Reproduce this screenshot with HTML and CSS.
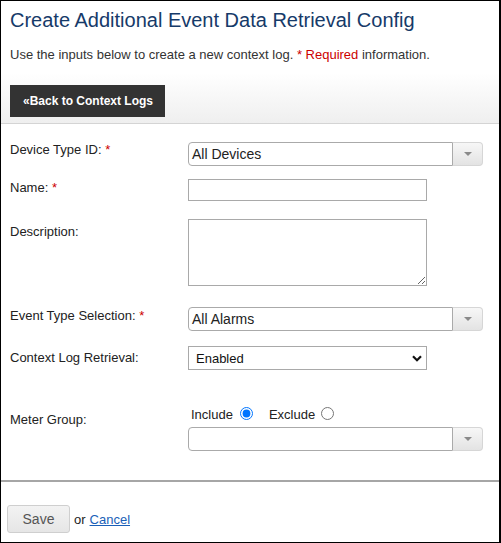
FILE: index.html
```html
<!DOCTYPE html>
<html lang="en">
<head>
<meta charset="utf-8">
<title>Create Additional Event Data Retrieval Config</title>
<link rel="stylesheet" href="styles.css">
</head>
<body>
<div class="page">
  <div class="header">
    <h1 class="title">Create Additional Event Data Retrieval Config</h1>
    <p class="intro">Use the inputs below to create a new context log. <span class="req">* Required</span> information.</p>
    <a class="back-btn" href="#">«Back to Context Logs</a>
  </div>
  <form class="form">
    <div class="row row-1">
      <label class="label">Device Type ID: <span class="req">*</span></label>
      <div class="combo">
        <span class="combo-input">All Devices</span>
        <span class="combo-btn"><svg width="8" height="4" viewBox="0 0 8 4"><path d="M0 0H8L4 4Z" fill="#8a8a8a"/></svg></span>
      </div>
    </div>
    <div class="row row-2">
      <label class="label pad-1">Name: <span class="req">*</span></label>
      <input class="text-input" type="text">
    </div>
    <div class="row row-3">
      <label class="label pad-5">Description:</label>
      <textarea class="text-area"></textarea>
    </div>
    <div class="row row-4">
      <label class="label pad-1">Event Type Selection: <span class="req">*</span></label>
      <div class="combo">
        <span class="combo-input">All Alarms</span>
        <span class="combo-btn"><svg width="8" height="4" viewBox="0 0 8 4"><path d="M0 0H8L4 4Z" fill="#8a8a8a"/></svg></span>
      </div>
    </div>
    <div class="row row-5">
      <label class="label pad-4">Context Log Retrieval:</label>
      <div class="select-wrap">
        <select class="select"><option>Enabled</option><option>Disabled</option></select>
        <svg class="chevron" width="10" height="7" viewBox="0 0 10 7"><path d="M1 1.2L5 5.2L9 1.2" fill="none" stroke="#111" stroke-width="2.2"/></svg>
      </div>
    </div>
    <div class="row row-6">
      <label class="label pad-6">Meter Group:</label>
      <div class="meter">
        <div class="radios">
          <span class="radio-text">Include</span><input class="radio radio-inc" type="radio" name="mg" checked>
          <span class="radio-text">Exclude</span><input class="radio radio-exc" type="radio" name="mg">
        </div>
        <div class="combo">
          <span class="combo-input"></span>
          <span class="combo-btn"><svg width="8" height="4" viewBox="0 0 8 4"><path d="M0 0H8L4 4Z" fill="#8a8a8a"/></svg></span>
        </div>
      </div>
    </div>
  </form>
  <div class="footer">
    <button class="save-btn" type="button">Save</button>
    <span class="or">or</span>
    <a class="cancel" href="#">Cancel</a>
  </div>
</div>
</body>
</html>
```
FILE: styles.css
```css
* { box-sizing: border-box; }
html, body { margin: 0; padding: 0; }
body {
  font-family: Arial, "Liberation Sans", sans-serif;
  font-size: 13px;
  color: #222;
  background: #fff;
}
.page {
  width: 501px;
  height: 543px;
  border: 1px solid #000;
  border-right-width: 2px;
  overflow: hidden;
}
.header {
  padding: 7px 9px 6px;
  background: linear-gradient(to bottom, #ffffff 0, #ffffff 72px, #efefef 122px);
  border-bottom: 1px solid #d4d4d4;
}
.title {
  margin: 0;
  font-size: 20px;
  font-weight: normal;
  line-height: 24px;
  color: #163a69;
}
.intro {
  margin: 15px 0 22px;
  line-height: 16px;
  color: #333;
}
.req { color: #cc0000; }
.back-btn {
  display: inline-block;
  height: 32px;
  line-height: 32px;
  padding: 0 12px 0 13px;
  background: #333;
  color: #fff;
  font-weight: bold;
  font-size: 12px;
  text-decoration: none;
}
.form {
  padding: 18px 0 29px 9px;
}
.row {
  display: flex;
  align-items: flex-start;
}
.row-1 { margin-bottom: 13px; }
.row-2 { margin-bottom: 18px; }
.row-3 { margin-bottom: 21px; }
.row-4 { margin-bottom: 15px; }
.row-5 { margin-bottom: 36px; }
.label {
  width: 178px;
  flex: none;
  line-height: 16px;
  color: #222;
}
.pad-1 { padding-top: 1px; }
.pad-4 { padding-top: 4px; }
.pad-5 { padding-top: 5px; }
.pad-6 { padding-top: 6px; }
.combo {
  display: flex;
  width: 295px;
  height: 24px;
}
.combo-input {
  flex: 1;
  border: 1px solid #aaa;
  border-radius: 4px 0 0 4px;
  background: #fff;
  padding: 0 3px;
  font-size: 14px;
  line-height: 22px;
  color: #222;
}
.combo-btn {
  width: 30px;
  flex: none;
  border: 1px solid #d6d6d6;
  border-left: none;
  border-radius: 0 4px 4px 0;
  background: linear-gradient(to bottom, #f7f7f7, #e3e3e3);
  display: flex;
  align-items: center;
  justify-content: center;
}
.text-input {
  width: 239px;
  height: 22px;
  margin: 0;
  border: 1px solid #a9a9a9;
  padding: 0 3px;
  font: inherit;
}
.text-area {
  width: 239px;
  height: 67px;
  margin: 0;
  border: 1px solid #a9a9a9;
  padding: 2px;
  font: inherit;
}
.select-wrap {
  position: relative;
  width: 239px;
  height: 24px;
}
.select {
  appearance: none;
  -webkit-appearance: none;
  width: 100%;
  height: 24px;
  margin: 0;
  border: 1px solid #a9a9a9;
  border-radius: 0;
  background: #fff;
  padding: 0 0 0 7px;
  font: inherit;
  font-size: 13px;
  color: #111;
}
.chevron {
  position: absolute;
  right: 5px;
  top: 9px;
  pointer-events: none;
}
.meter {
  padding-top: 1px;
}
.radios {
  display: flex;
  align-items: flex-start;
  padding-left: 3px;
  height: 18px;
  margin-bottom: 2px;
}
.radio-text {
  padding-top: 0;
  line-height: 16px;
  color: #222;
}
.radio {
  width: 13px;
  height: 13px;
  margin: 0;
  flex: none;
}
.radio-inc { margin-left: 7px; margin-right: 16px; }
.radio-exc { margin-left: 6px; }
.footer {
  border-top: 2px solid #a6a6a6;
  padding: 23px 0 0 6px;
  display: flex;
  align-items: center;
}
.save-btn {
  width: 63px;
  height: 28px;
  margin: 0;
  border: 1px solid #cfcfcf;
  border-radius: 3px;
  background: linear-gradient(to bottom, #f3f3f3, #e6e6e6);
  color: #555;
  font-family: Arial, "Liberation Sans", sans-serif;
  font-size: 14px;
}
.or {
  margin-left: 4px;
  color: #222;
}
.cancel {
  margin-left: 4px;
  color: #1a5fb8;
  text-decoration: underline;
}
```
